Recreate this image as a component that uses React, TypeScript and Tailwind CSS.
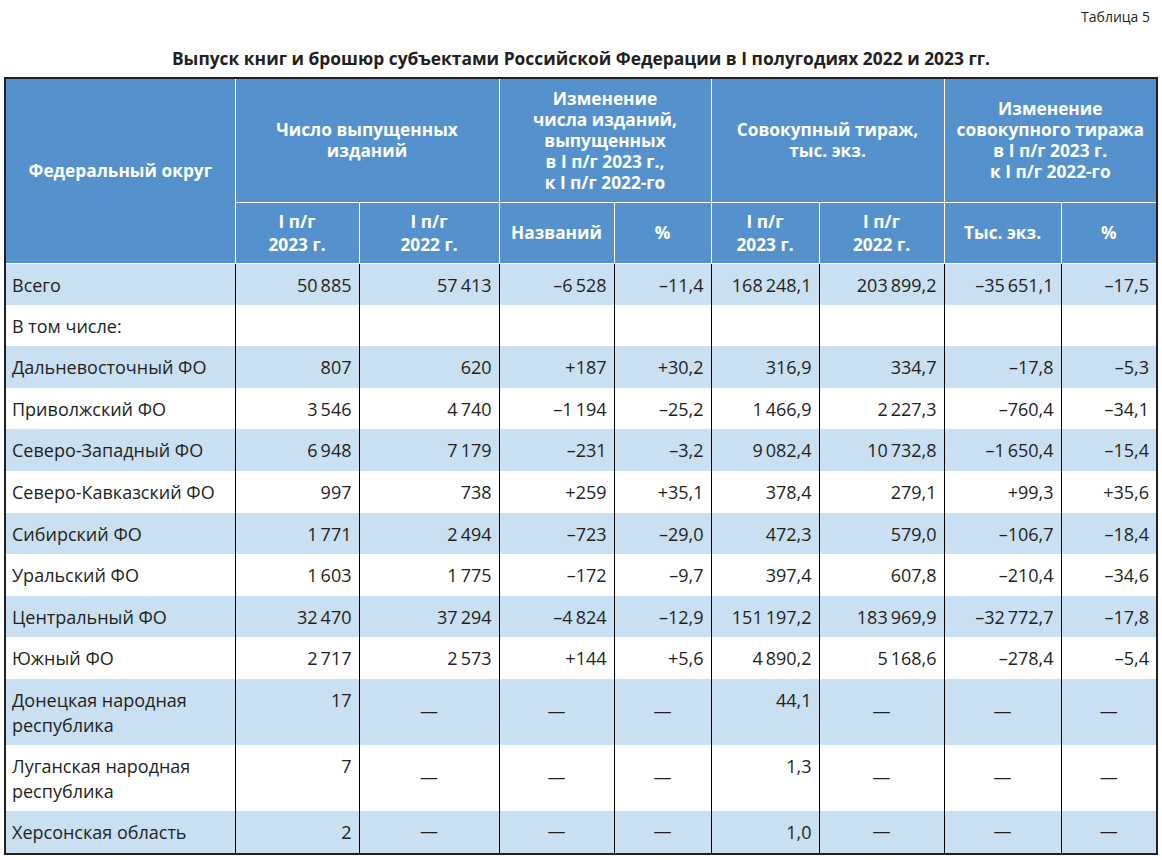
import React from 'react';

const rows: string[][] = [
  ['Всего', '50 885', '57 413', '–6 528', '–11,4', '168 248,1', '203 899,2', '–35 651,1', '–17,5'],
  ['В том числе:', '', '', '', '', '', '', '', ''],
  ['Дальневосточный ФО', '807', '620', '+187', '+30,2', '316,9', '334,7', '–17,8', '–5,3'],
  ['Приволжский ФО', '3 546', '4 740', '–1 194', '–25,2', '1 466,9', '2 227,3', '–760,4', '–34,1'],
  ['Северо-Западный ФО', '6 948', '7 179', '–231', '–3,2', '9 082,4', '10 732,8', '–1 650,4', '–15,4'],
  ['Северо-Кавказский ФО', '997', '738', '+259', '+35,1', '378,4', '279,1', '+99,3', '+35,6'],
  ['Сибирский ФО', '1 771', '2 494', '–723', '–29,0', '472,3', '579,0', '–106,7', '–18,4'],
  ['Уральский ФО', '1 603', '1 775', '–172', '–9,7', '397,4', '607,8', '–210,4', '–34,6'],
  ['Центральный ФО', '32 470', '37 294', '–4 824', '–12,9', '151 197,2', '183 969,9', '–32 772,7', '–17,8'],
  ['Южный ФО', '2 717', '2 573', '+144', '+5,6', '4 890,2', '5 168,6', '–278,4', '–5,4'],
  ['Донецкая народная республика', '17', '—', '—', '—', '44,1', '—', '—', '—'],
  ['Луганская народная республика', '7', '—', '—', '—', '1,3', '—', '—', '—'],
  ['Херсонская область', '2', '—', '—', '—', '1,0', '—', '—', '—'],
];

const widths = [229, 124, 140, 115, 97, 108, 125, 117, 95];

const th = 'border-r border-b border-white font-bold text-white text-center align-middle px-1';

const App = () => {
  return (
    <div
      className="w-[1162px] h-[860px] bg-white text-[#231f20]"
      style={{ fontFamily: '"Open Sans", "Noto Sans", sans-serif' }}
    >
      <div className="pt-[7px] pr-[12px] text-right text-[14px] leading-[20px]">Таблица 5</div>
      <h1 className="mt-[20px] text-center text-[17.4px] leading-[22px] font-bold">
        Выпуск книг и брошюр субъектами Российской Федерации в I полугодиях 2022 и 2023 гг.
      </h1>
      <div className="mt-[8px] ml-[4px] w-[1154px] border-2 border-[#231f20]">
        <table className="w-full table-fixed border-collapse">
          <colgroup>
            {widths.map((w, i) => (
              <col key={i} style={{ width: w }} />
            ))}
          </colgroup>
          <thead className="bg-[#5592cd] text-[17.3px] leading-[21px]">
            <tr className="h-[123px]">
              <th rowSpan={2} className={th}>Федеральный округ</th>
              <th colSpan={2} className={th}>
                Число выпущенных
                <br />
                изданий
              </th>
              <th colSpan={2} className={th}>
                Изменение
                <br />
                числа изданий,
                <br />
                выпущенных
                <br />в I п/г 2023 г.,
                <br />к I п/г 2022-го
              </th>
              <th colSpan={2} className={th}>
                Совокупный тираж,
                <br />
                тыс. экз.
              </th>
              <th colSpan={2} className={`${th} border-r-0`}>
                Изменение
                <br />
                совокупного тиража
                <br />в I п/г 2023 г.
                <br />к I п/г 2022-го
              </th>
            </tr>
            <tr className="h-[61px] leading-[23px]">
              <th className={th}>
                I п/г
                <br />
                2023 г.
              </th>
              <th className={th}>
                I п/г
                <br />
                2022 г.
              </th>
              <th className={th}>Названий</th>
              <th className={th}>%</th>
              <th className={th}>
                I п/г
                <br />
                2023 г.
              </th>
              <th className={th}>
                I п/г
                <br />
                2022 г.
              </th>
              <th className={th}>Тыс. экз.</th>
              <th className={`${th} border-r-0`}>%</th>
            </tr>
          </thead>
          <tbody className="text-[18px] leading-[25px]">
            {rows.map((r, i) => {
              const tall = r[0].includes('республика');
              return (
                <tr
                  key={i}
                  className={`${i % 2 === 0 ? 'bg-[#c9dff2]' : 'bg-white'} ${tall ? 'h-[66px]' : 'h-[41.6px]'}`}
                >
                  {r.map((c, j) => {
                    const last = j === r.length - 1 ? 'border-r-0' : 'border-r';
                    if (j === 0)
                      return (
                        <td key={j} className={`${last} border-black align-top pt-[9px] pl-[6px] pr-2`}>
                          {c}
                        </td>
                      );
                    if (c === '—')
                      return (
                        <td key={j} className={`${last} border-black align-middle text-center`}>
                          —
                        </td>
                      );
                    return (
                      <td key={j} className={`${last} border-black align-top pt-[9px] pr-[7px] text-right whitespace-nowrap`}>
                        {c.replace(/ /g, '\u2009')}
                      </td>
                    );
                  })}
                </tr>
              );
            })}
          </tbody>
        </table>
      </div>
    </div>
  );
};

export default App;
